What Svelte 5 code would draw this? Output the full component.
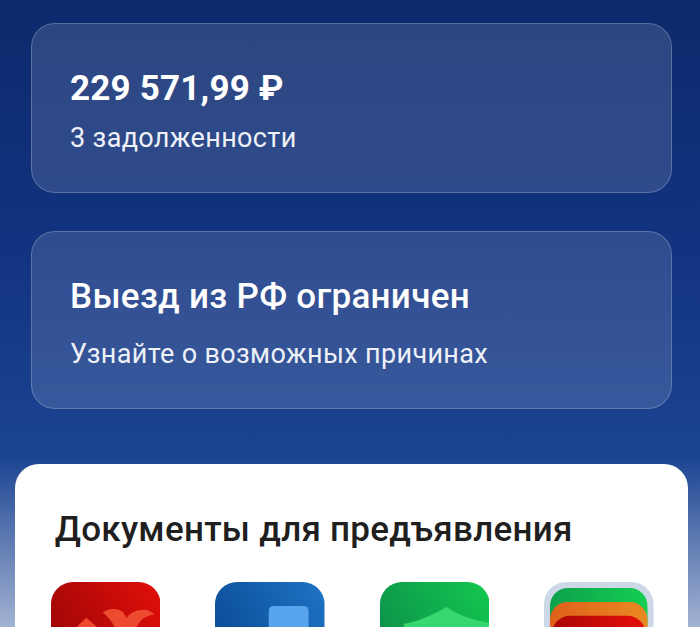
<script>
  const summary = { amount: '229 571,99 ₽', note: '3 задолженности' };
  const travel = { title: 'Выезд из РФ ограничен', note: 'Узнайте о возможных причинах' };
</script>

<main class="page">
  <section class="card debt">
    <div class="amount">{summary.amount}</div>
    <div class="note">{summary.note}</div>
  </section>
  <section class="card travel">
    <div class="title">{travel.title}</div>
    <div class="note">{travel.note}</div>
  </section>
  <section class="sheet">
    <h2>Документы для предъявления</h2>
    <div class="docs">
      <svg class="doc" viewBox="0 0 110 110">
        <defs><linearGradient id="r" x1="0" y1="0.6" x2="1" y2="0"><stop offset="0" stop-color="#9c0606"/><stop offset="1" stop-color="#e20f0a"/></linearGradient></defs>
        <rect width="110" height="110" rx="22" fill="url(#r)"/>
        <path d="M26 45 L35.5 36 L46 45 L50 49 L50 110 L18 110 Z" fill="#ee4a30"/>
        <path d="M52 31 C56 27 66 25 72 30 L76 36 C80 30 88 27 96 28 C99 29 102 31 104 33 C96 33 90 38 86 45 L80 60 L70 60 L64 45 C60 38 56 34 52 31 Z" fill="#ee4a30"/>
      </svg>
      <svg class="doc" viewBox="0 0 110 110">
        <defs><linearGradient id="b" x1="0" y1="0.6" x2="1" y2="0"><stop offset="0" stop-color="#0a4a94"/><stop offset="1" stop-color="#1e74c4"/></linearGradient></defs>
        <rect width="110" height="110" rx="22" fill="url(#b)"/>
        <rect x="54" y="24" width="40" height="60" rx="5" fill="#58a5ee"/>
      </svg>
      <svg class="doc" viewBox="0 0 110 110">
        <defs><linearGradient id="g" x1="0" y1="0.6" x2="1" y2="0"><stop offset="0" stop-color="#0b8f49"/><stop offset="1" stop-color="#14c850"/></linearGradient></defs>
        <rect width="110" height="110" rx="22" fill="url(#g)"/>
        <path d="M24 42 C40 39 53 33 67 25 C78 33 92 38 110 41 L110 110 L24 110 Z" fill="#38d870"/>
      </svg>
      <svg class="doc" viewBox="0 0 110 110">
        <defs>
          <linearGradient id="sg" x1="0" y1="0" x2="1" y2="0"><stop offset="0" stop-color="#0ea04c"/><stop offset="1" stop-color="#14ce52"/></linearGradient>
          <linearGradient id="so" x1="0" y1="0" x2="1" y2="0"><stop offset="0" stop-color="#e0601a"/><stop offset="1" stop-color="#e88a22"/></linearGradient>
          <linearGradient id="sr" x1="0" y1="0" x2="1" y2="0"><stop offset="0" stop-color="#ac0606"/><stop offset="1" stop-color="#e40f0a"/></linearGradient>
        </defs>
        <rect width="110" height="110" rx="22" fill="#cdd8e6"/>
        <rect x="6" y="6" width="98" height="100" rx="18" fill="url(#sg)"/>
        <rect x="6" y="20" width="98" height="90" rx="18" fill="url(#so)"/>
        <rect x="8" y="34" width="94" height="80" rx="18" fill="url(#sr)"/>
      </svg>
    </div>
  </section>
</main>

<style>
  :global(body) { margin: 0; }
  .page {
    box-sizing: border-box;
    width: 700px;
    height: 627px;
    overflow: hidden;
    padding-top: 23px;
    font-family: Roboto, "Noto Sans", sans-serif;
    color: #fff;
    background: linear-gradient(180deg, #0c2a6c 0%, #123380 40%, #1c4492 73%, #a2b3d3 100%);
  }
  .card {
    box-sizing: border-box;
    margin: 0 28px 0 31px;
    padding: 0 38px;
    border: 1px solid rgba(255, 255, 255, 0.22);
    border-radius: 24px;
    background: rgba(255, 255, 255, 0.13);
  }
  .debt { height: 170px; padding-top: 45px; }
  .travel { height: 178px; margin-top: 38px; padding-top: 45px; }
  .amount { font-size: 35px; font-weight: 700; line-height: 40px; letter-spacing: 0.2px; }
  .title { font-size: 35px; font-weight: 500; line-height: 40px; letter-spacing: 0.3px; }
  .note { font-size: 27px; line-height: 32px; letter-spacing: 0.35px; color: #eef1f8; }
  .debt .note { margin-top: 13px; }
  .travel .note { margin-top: 21px; }
  .sheet {
    box-sizing: border-box;
    margin: 55px 12px 0 15px;
    height: 220px;
    padding: 45px 34.25px 0 35.75px;
    border-radius: 24px 24px 0 0;
    background: #fff;
    color: #1f1f1f;
  }
  h2 { margin: 0 0 0 4px; font-size: 35px; font-weight: 500; line-height: 42px; letter-spacing: 0.27px; }
  .docs { display: flex; justify-content: space-between; margin-top: 31px; }
  .doc { width: 109.5px; height: 109.5px; display: block; flex: none; }
</style>
